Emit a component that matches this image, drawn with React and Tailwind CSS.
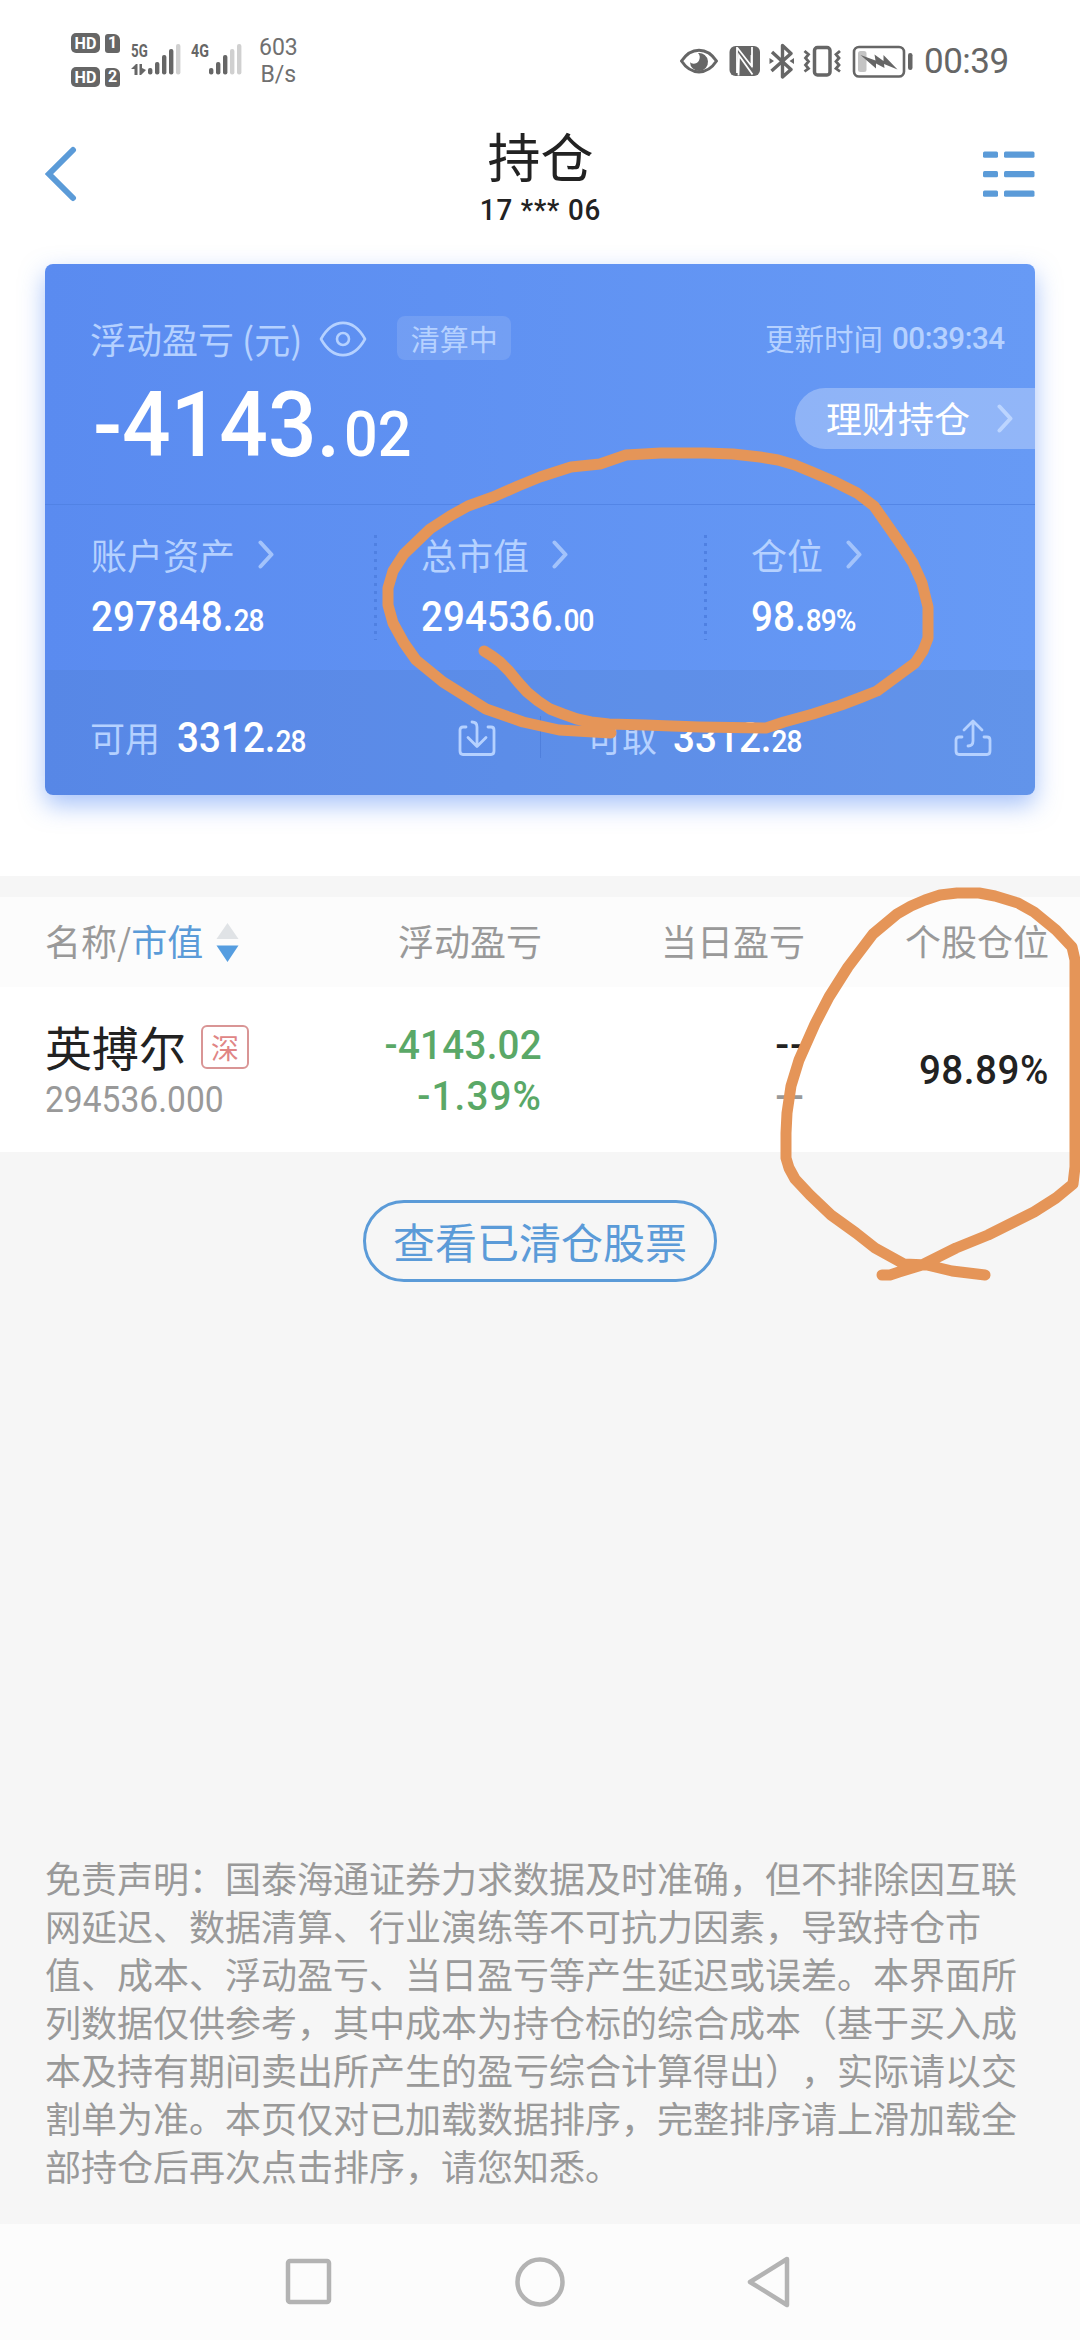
import React, { Component } from "react";

const SUMMARY = [
  { label: "账户资产", value: "297848.", decimals: "28" },
  { label: "总市值", value: "294536.", decimals: "00" },
  { label: "仓位", value: "98.", decimals: "89%" },
];

const DISCLAIMER = [
  "免责声明：国泰海通证券力求数据及时准确，但不排除因互联",
  "网延迟、数据清算、行业演练等不可抗力因素，导致持仓市",
  "值、成本、浮动盈亏、当日盈亏等产生延迟或误差。本界面所",
  "列数据仅供参考，其中成本为持仓标的综合成本（基于买入成",
  "本及持有期间卖出所产生的盈亏综合计算得出），实际请以交",
  "割单为准。本页仅对已加载数据排序，完整排序请上滑加载全",
  "部持仓后再次点击排序，请您知悉。",
];

function HdBadge({ sim }) {
  return (
    <div className="flex items-center gap-[5px]">
      <span className="flex h-5 w-[29px] items-center justify-center rounded-[5px] bg-[#666] font-['Roboto'] text-[17px] leading-none font-bold text-white">
        <span className="scale-x-[0.95]">HD</span>
      </span>
      <span className="flex h-[19px] w-[15px] items-center justify-center rounded-[3px] rounded-tr-[6px] bg-[#666] font-['Roboto'] text-[16px] leading-none font-bold text-white">
        {sim}
      </span>
    </div>
  );
}

function SignalBars({ level }) {
  const tops = [24, 18, 11, 5, 0];

  return (
    <svg width="33" height="31" viewBox="0 0 33 31">
      {tops.map((top, i) => (
        <rect
          key={top}
          x={i * 7}
          y={top}
          width="4.4"
          height={30.5 - top}
          rx="2"
          fill={i < level ? "#666" : "#d0d0d0"}
        />
      ))}
    </svg>
  );
}

function StatusIcons() {
  return (
    <svg width="234" height="36" viewBox="680 41 234 36" fill="none">
      <path
        d="M681.5 59C691 44.500 707 44.500 716.500 59C707 73.500 691 73.500 681.500 59Z"
        stroke="#666"
        strokeWidth="3"
        strokeLinejoin="round"
      />
      <path
        d="M698 51a9 9 0 1 1 -8 9c1.500 2.500 7 2.500 9-1.500c1.300-3 1-5.500-1-7.500z"
        fill="#666"
      />
      <rect x="729.500" y="44" width="30.500" height="30" rx="6" fill="#666" />
      <path
        d="M737 45v26M737.500 46l14 18V53M738.500 73.500l.5-20l13.500 19M752 45v20"
        stroke="#fff"
        strokeWidth="1.800"
      />
      <path
        d="M772 50l19 17.500l-8.500 7.500V43.500l8.500 8L771.500 69"
        stroke="#666"
        strokeWidth="3.400"
        strokeLinejoin="round"
      />
      <path d="M769.500 56l4.500 3l-4.500 3zM794 56l-4.500 3l4.500 3z" fill="#666" />
      <rect x="814.500" y="45.500" width="15.500" height="27.500" rx="3" stroke="#666" strokeWidth="3.500" />
      <path
        d="M804.500 49l4 3.500l-3 3.500l3 3.500l-3 3.500l3 3.500l-4 3M840 49l-4 3.500l3 3.500l-3 3.500l3 3.500l-3 3.500l4 3"
        stroke="#666"
        strokeWidth="2.800"
      />
      <rect x="854" y="45" width="50" height="29.500" rx="5" stroke="#666" strokeWidth="2.600" />
      <rect x="858" y="49" width="8.500" height="21" rx="2.500" fill="#c4c4c4" />
      <path
        d="M860.500 53l15 5.500l-1-6l9 6.500l0-6l14 14.500l-13.500-5.500l.5 4l-8.500-4.500l0 5z"
        fill="#666"
      />
      <rect x="908" y="51" width="4.500" height="17" rx="2.200" fill="#666" />
    </svg>
  );
}

function Chevron() {
  return (
    <svg width="17" height="29" viewBox="0 0 17 29" fill="none">
      <path
        d="M2.500 2.500L13.500 14.500L2.500 26.500"
        stroke="currentColor"
        strokeWidth="4"
        strokeLinecap="round"
        strokeLinejoin="round"
      />
    </svg>
  );
}

// Narrow numerals: integer part large, decimals smaller on one baseline
function Amount({ value, decimals }) {
  return (
    <span className="inline-block origin-left scale-x-[0.92] font-['Roboto'] text-[42px] leading-none font-medium text-white">
      {value}
      <span className="text-[30.500px] tracking-[-1px]">{decimals}</span>
    </span>
  );
}

function StatusBar() {
  return (
    <div className="flex h-[118px] items-start justify-between pr-[71px] pl-[71px]">
      <div className="flex">
        <div className="mt-[33px] flex flex-col gap-[14px]">
          <HdBadge sim="1" />
          <HdBadge sim="2" />
        </div>
        <div className="mt-[44px] ml-[11px] flex">
          <div className="flex w-[17px] flex-col">
            <span className="origin-left scale-x-[0.7] font-['Roboto'] text-[19px] leading-[14px] font-bold text-[#666]">
              5G
            </span>
            <svg className="mt-[6px]" width="15" height="11" viewBox="0 0 15 11">
              <path d="M0 5L5 0H6.500V11H3.500V5zM8.500 0H11V4L15 6L10 11H8.500z" fill="#666" />
            </svg>
          </div>
          <SignalBars level={4} />
        </div>
        <div className="mt-[44px] ml-[10px] flex">
          <span className="w-[18px] origin-left scale-x-[0.75] font-['Roboto'] text-[19px] leading-[14px] font-bold text-[#666]">
            4G
          </span>
          <SignalBars level={3} />
        </div>
        <div className="mt-[34px] ml-[17px] text-center font-['Roboto'] text-[23px] leading-[27px] text-[#707070]">
          <div>603</div>
          <div>B/s</div>
        </div>
      </div>

      <div className="mt-[41px] flex items-center">
        <StatusIcons />
        <span className="mt-[2px] ml-[10px] w-[85px] font-['Roboto'] text-[35px] leading-[38px] tracking-[-0.5px] text-[#666]">
          00:39
        </span>
      </div>
    </div>
  );
}

function PageHeader() {
  return (
    <header className="flex h-[146px] items-start justify-between pr-[44px] pl-[45px]">
      <svg className="mt-[28px]" width="54" height="56" viewBox="0 0 54 56" fill="none">
        <path d="M28 4L4 28L28 52" stroke="#5b9bd8" strokeWidth="6" strokeLinecap="round" />
      </svg>
      <div className="mt-[8px] flex flex-col items-center text-[#222]">
        <h1 className="text-[53px] leading-[58px]">持仓</h1>
        <p className="mt-[9px] scale-x-[0.94] font-['Roboto'] text-[29.500px] leading-[34px] font-medium tracking-[0.9px]">
          17 *** 06
        </p>
      </div>
      <svg className="mt-[32px]" width="54" height="50" viewBox="0 0 54 50" fill="#5b9bd8">
        <rect x="1" y="1.500" width="15" height="6.300" rx="1.500" />
        <rect x="22" y="1.500" width="30.500" height="6.300" rx="1.500" />
        <rect x="1" y="21" width="15" height="6.300" rx="1.500" />
        <rect x="22" y="21" width="30.500" height="6.300" rx="1.500" />
        <rect x="1" y="40.400" width="15" height="6.300" rx="1.500" />
        <rect x="22" y="40.400" width="30.500" height="6.300" rx="1.500" />
      </svg>
    </header>
  );
}

function AssetCard() {
  return (
    <section className="mx-[45px] h-[531px] rounded-lg bg-linear-to-r from-[#5a8bf0] to-[#679af5] shadow-[0_10px_24px_rgba(80,135,245,0.5)]">
      <div className="h-[240px] pt-[49px] pl-[45px] text-[#b5d1ff]">
        <div className="flex h-[50px] items-center">
          <span className="flex text-[36px] leading-[50px]">
            浮动盈亏
            <span className="ml-[8px]">(</span>元<span>)</span>
          </span>
          <svg className="mt-[2px] ml-[17px]" width="48" height="36" viewBox="0 0 48 36" fill="none" stroke="#b5d1ff" strokeWidth="2.600">
            <path d="M2 18C14-3.500 34-3.500 46 18C34 39.500 14 39.500 2 18Z" strokeLinejoin="round" />
            <circle cx="24" cy="18" r="6" />
          </svg>
          <span className="ml-[30px] flex h-[44px] w-[114px] items-center justify-center rounded-lg bg-white/12 text-[29px] leading-none">
            清算中
          </span>
          <span className="mr-[30px] ml-auto flex items-center text-[29.500px] leading-none">
            更新时间
            <span className="mt-[2px] ml-[9px] w-[113px] origin-left scale-x-[0.97] font-['Roboto'] text-[30.500px] font-medium tracking-[-0.5px] whitespace-nowrap">
              00:39:34
            </span>
          </span>
        </div>
        <div className="flex justify-between">
          <div className="mt-[12px] ml-[3px] origin-left scale-x-[0.94] font-['Roboto'] text-[91px] leading-[100px] font-medium text-white">
            -4143.<span className="ml-[4px] text-[63px]">02</span>
          </div>
          <div className="mt-[25px] flex h-[61px] w-[240px] items-center rounded-l-full bg-white/28 pl-[31px] text-[36px] leading-[56px] text-white">
            <span className="-mt-[3px]">理财持仓</span>
            <span className="ml-[27px] text-[#bcd5ff]">
              <Chevron />
            </span>
          </div>
        </div>
      </div>

      <div className="grid h-[166px] grid-cols-3 border-t border-[#4d7fe0]/70">
        {SUMMARY.map((item, i) => (
          <div key={item.label} className="flex">
            {i > 0 && (
              <svg className="mt-[30px] -mr-[2px] -ml-[1px]" width="3" height="105" viewBox="0 0 3 105">
                <path d="M1.500 0V105" stroke="#4f80e2" strokeWidth="3" strokeDasharray="3 5" />
              </svg>
            )}
            <div className="pt-[25px] pl-[46px]">
              <div className="flex h-[48px] items-center text-[36px] leading-[48px] text-[#b5d1ff]">
                {item.label}
                <span className="mt-[1px] ml-[23px] text-[#a3c3fb]">
                  <Chevron />
                </span>
              </div>
              <div className="mt-[18px]">
                <Amount value={item.value} decimals={item.decimals} />
              </div>
            </div>
          </div>
        ))}
      </div>

      <div className="grid h-[125px] grid-cols-2 rounded-b-lg bg-[#4a6fb0]/15">
        <div className="flex items-center justify-between pt-[10px] pr-[44px] pl-[45px]">
          <div className="flex items-center">
            <span className="-mt-[2px] mr-[17px] text-[35px] leading-[48px] text-[#b5d1ff]">可用</span>
            <Amount value="3312." decimals="28" />
          </div>
          <svg width="38" height="38" viewBox="0 0 38 38" fill="none" stroke="#b5d1ff" strokeWidth="2.800" strokeLinecap="round" strokeLinejoin="round">
            <path d="M8 8H5Q2 8 2 11V32Q2 35.500 5 35.500H33Q36 35.500 36 32V11Q36 8 33 8H30" />
            <path d="M14 3Q19 3 19 8V27M10 18.500L19 27.500L28 18.500" />
          </svg>
        </div>
        <div className="flex">
          <div className="mt-[46px] -mr-px h-[42px] w-px bg-[#4f7fdc]" />
          <div className="flex flex-1 items-center justify-between pt-[10px] pr-[43px] pl-[47px]">
            <div className="flex items-center">
              <span className="-mt-[2px] mr-[16px] text-[35px] leading-[48px] text-[#b5d1ff]">可取</span>
              <Amount value="3312." decimals="28" />
            </div>
            <svg width="38" height="38" viewBox="0 0 38 38" fill="none" stroke="#b5d1ff" strokeWidth="2.800" strokeLinecap="round" strokeLinejoin="round">
              <path d="M8 18H5Q2 18 2 21V32Q2 35.500 5 35.500H33Q36 35.500 36 32V21Q36 18 33 18H30" />
              <path d="M14 27Q19 27 19 22V2.500M10 11L19 2L28 11" />
            </svg>
          </div>
        </div>
      </div>
    </section>
  );
}

function HoldingTable() {
  return (
    <section>
      <div className="grid h-[90px] grid-cols-[279px_263px_263px_244px] items-start bg-[#fcfcfc] pt-[18px] text-[36px] leading-[50px] text-[#999]">
        <div className="flex h-[50px] items-center pl-[45px] whitespace-nowrap">
          名称/<span className="text-[#5b9bd8]">市值</span>
          <svg className="mt-[4px] ml-[13px]" width="23" height="40" viewBox="0 0 23 40">
            <path d="M11.500 1L22.500 17H.5z" fill="#e0e3e6" />
            <path d="M11.500 40L22.500 23.500H.5z" fill="#559de0" />
          </svg>
        </div>
        <div className="text-right">浮动盈亏</div>
        <div className="text-right">当日盈亏</div>
        <div className="text-right">个股仓位</div>
      </div>

      <div className="grid h-[165px] grid-cols-[279px_263px_263px_244px] bg-white font-['Roboto'] text-[41px] leading-[51px] font-medium">
        <div className="pt-[32px] pl-[45px] whitespace-nowrap">
          <div className="flex items-center">
            <span className="font-['Noto_Sans_CJK_SC'] text-[47px] leading-[54px] font-normal text-[#222]">
              英搏尔
            </span>
            <span className="mt-[2px] ml-[15px] flex h-[44px] w-[48px] items-center justify-center rounded-md border-2 border-[#d99595] font-['Noto_Sans_CJK_SC'] text-[28px] leading-none font-normal text-[#e08585]">
              深
            </span>
          </div>
          <div className="mt-[4px] origin-left scale-x-[0.92] text-[36.500px] leading-[46px] font-normal text-[#999]">
            294536.000
          </div>
        </div>
        <div className="origin-right scale-x-[0.94] pt-[33px] text-right text-[#5aa867]">
          <div className="tracking-[0.3px]">-4143.02</div>
          <div className="tracking-[1.2px]">-1.39%</div>
        </div>
        <div className="pt-[33px] text-right tracking-[1px]">
          <div className="text-[#222]">--</div>
          <div className="text-[#999]">--</div>
        </div>
        <div className="origin-right scale-x-[0.94] pt-[58px] text-right tracking-[0.6px] text-[#222]">
          98.89%
        </div>
      </div>
    </section>
  );
}

function SystemNav() {
  return (
    <nav className="flex h-[116px] items-center justify-between bg-[#fcfcfc] px-[284px]">
      <svg width="50" height="52" viewBox="0 0 50 52" fill="none" stroke="#b3b3b3" strokeWidth="4.500">
        <rect x="4" y="5" width="41" height="41" rx="2" />
      </svg>
      <svg width="52" height="52" viewBox="0 0 52 52" fill="none" stroke="#b3b3b3" strokeWidth="4.500">
        <circle cx="26" cy="26" r="22.500" />
      </svg>
      <svg width="50" height="52" viewBox="0 0 50 52" fill="none" stroke="#b3b3b3" strokeWidth="4.500" strokeLinejoin="round">
        <path d="M41 3L4 26L41 49Z" />
      </svg>
    </nav>
  );
}

// Freehand marker strokes laid over the page
function MarkerStrokes() {
  return (
    <svg
      className="pointer-events-none absolute top-0 left-0"
      width="1080"
      height="2340"
      viewBox="0 0 1080 2340"
      fill="none"
      stroke="#e59558"
      strokeWidth="11"
      strokeLinecap="round"
      strokeLinejoin="round"
    >
      <polyline points="484,651 492,656 500,662 509,671 518,682 527,692 538,701 550,709 563,714 577,719 591,722 609,724 645,725 699,727 766,728 784,722 813,714 841,705 862,697 877,691 896,677 915,663 923,651 928,638 928,607 922,583 913,563 902,546 888,526 874,506 857,493 833,481 812,472 795,465 778,460 760,457 733,454 705,453 661,453 626,455 600,464 571,467 540,477 518,486 493,497 468,506 450,516 430,529 404,554 393,571 388,588 388,605 393,623 404,643 416,660 443,682 486,709 523,722 559,730 611,733" />
      <polyline points="882,1275 890,1275 899,1272 922,1265 956,1248 988,1235 1034,1212 1056,1198 1073,1184 1075,1167 1075,960 1072,947 1056,930 1034,912 1018,903 995,896 979,893 957,893 940,895 925,900 911,906 897,914 873,934 848,967 829,997 815,1024 799,1060 791,1086 787,1113 786,1133 786,1158 789,1168 795,1179 810,1195 831,1215 856,1233 875,1248 904,1264 927,1265 952,1271 985,1275" />
    </svg>
  );
}

class App extends Component {
  render() {
    return (
      <div className="relative flex h-[2340px] w-[1080px] flex-col overflow-hidden bg-[#f6f6f6] font-['Noto_Sans_CJK_SC',sans-serif]">
        <div className="h-[876px] bg-white">
          <StatusBar />
          <PageHeader />
          <AssetCard />
        </div>

        <main className="flex flex-1 flex-col pt-[21px]">
          <HoldingTable />

          <button
            type="button"
            className="mx-auto mt-[48px] h-[82px] w-[354px] rounded-full border-[3px] border-[#5b9bd8] text-[42px] leading-none text-[#5b9bd8]"
          >
            查看已清仓股票
          </button>

          <div className="mt-auto mb-[35px] ml-[45px] text-[36px] leading-[48px] whitespace-nowrap text-[#999] [text-spacing-trim:space-all]">
            {DISCLAIMER.map((line) => (
              <p key={line}>{line}</p>
            ))}
          </div>
        </main>

        <SystemNav />
        <MarkerStrokes />
      </div>
    );
  }
}

export default App;
